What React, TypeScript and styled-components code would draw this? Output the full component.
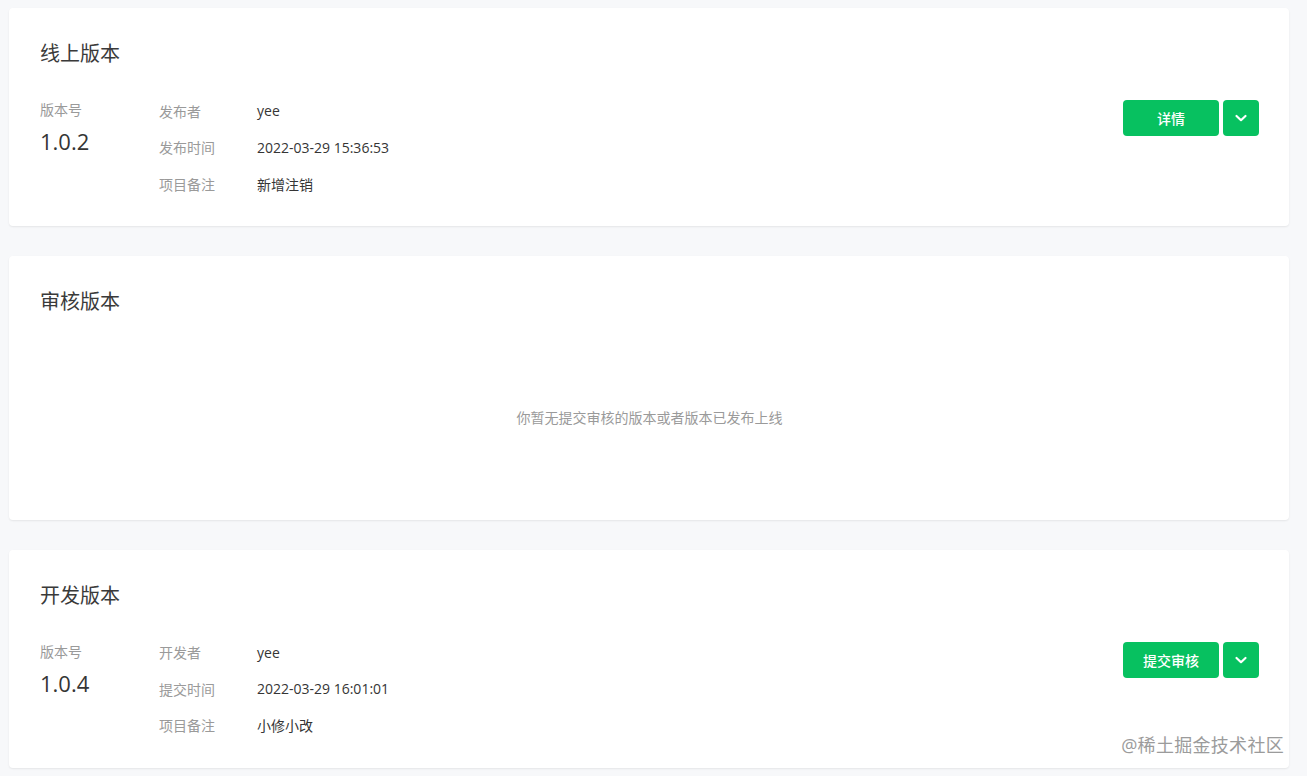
import { FC } from "react";
import styled, { createGlobalStyle } from "styled-components";

const GlobalStyle = createGlobalStyle`
  html, body {
    margin: 0;
    padding: 0;
    background: #f7f8fa;
  }
  body {
    font-family: "Open Sans", "Noto Sans CJK SC", sans-serif;
    color: #353535;
  }
`;

interface InfoRow {
  label: string;
  value: string;
}

interface VersionInfo {
  version: string;
  rows: InfoRow[];
  action: string;
}

// Styled Components
const Page = styled.div`
  position: relative;
  display: flex;
  flex-direction: column;
  gap: 30px;
  padding: 8px 18px 9px 9px;
  min-height: 776px;
  box-sizing: border-box;
`;

const Card = styled.section`
  background: #fff;
  border-radius: 4px;
  box-shadow: 0 1px 2px rgba(0, 0, 0, 0.08);
  padding: 32px 30px 24px 31px;
`;

const Title = styled.h2`
  margin: 0;
  font-size: 20px;
  line-height: 28px;
  font-weight: 400;
  color: #3a3a3a;
`;

const Body = styled.div`
  display: flex;
  align-items: flex-start;
  margin-top: 24.25px;
`;

const VersionCol = styled.div`
  width: 119px;
  flex-shrink: 0;
`;

const Label = styled.div`
  font-size: 14px;
  line-height: 36.5px;
  color: #9a9a9a;
`;

const VersionNum = styled.div`
  font-size: 22px;
  line-height: 24px;
  color: #353535;
`;

const Details = styled.div`
  flex: 1;
`;

const Row = styled.div`
  display: flex;
  height: 36.5px;
  align-items: center;
`;

const RowLabel = styled.span`
  width: 98px;
  font-size: 14px;
  color: #9a9a9a;
`;

const RowValue = styled.span`
  font-size: 14px;
  color: #353535;
`;

const Actions = styled.div`
  display: flex;
  gap: 4px;
  padding-top: 7.75px;
`;

const Button = styled.button<{ $square?: boolean }>`
  height: 36px;
  width: ${(p) => (p.$square ? "36px" : "96px")};
  border: none;
  border-radius: 4px;
  background: #07c160;
  color: #fff;
  font-family: inherit;
  font-size: 14px;
  font-weight: 500;
  display: flex;
  align-items: center;
  justify-content: center;
  padding: 0;
  cursor: pointer;
`;

const Empty = styled.div`
  height: 180px;
  padding-top: 22px;
  box-sizing: border-box;
  display: flex;
  align-items: center;
  justify-content: center;
  font-size: 14px;
  color: #9a9a9a;
`;

const Watermark = styled.div`
  position: absolute;
  right: 23px;
  bottom: 20px;
  font-size: 18px;
  color: #9b9b9b;
  letter-spacing: 0.3px;
  text-shadow: 0 0 2px #fff, 0 0 2px #fff;
`;

const Chevron = () => (
  <svg width="14" height="14" viewBox="0 0 14 14" fill="none">
    <path d="M2.5 5L7 9.2L11.5 5" stroke="#fff" strokeWidth="2.2" strokeLinecap="round" strokeLinejoin="round" />
  </svg>
);

const VersionCard: FC<{ title: string; info: VersionInfo }> = ({ title, info }) => (
  <Card>
    <Title>{title}</Title>
    <Body>
      <VersionCol>
        <Label>版本号</Label>
        <VersionNum>{info.version}</VersionNum>
      </VersionCol>
      <Details>
        {info.rows.map((row, index) => (
          <Row key={index}>
            <RowLabel>{row.label}</RowLabel>
            <RowValue>{row.value}</RowValue>
          </Row>
        ))}
      </Details>
      <Actions>
        <Button>{info.action}</Button>
        <Button $square>
          <Chevron />
        </Button>
      </Actions>
    </Body>
  </Card>
);

const online: VersionInfo = {
  version: "1.0.2",
  rows: [
    { label: "发布者", value: "yee" },
    { label: "发布时间", value: "2022-03-29 15:36:53" },
    { label: "项目备注", value: "新增注销" },
  ],
  action: "详情",
};

const dev: VersionInfo = {
  version: "1.0.4",
  rows: [
    { label: "开发者", value: "yee" },
    { label: "提交时间", value: "2022-03-29 16:01:01" },
    { label: "项目备注", value: "小修小改" },
  ],
  action: "提交审核",
};

const App: FC = () => (
  <>
    <GlobalStyle />
    <Page>
      <VersionCard title="线上版本" info={online} />
      <Card>
        <Title>审核版本</Title>
        <Empty>你暂无提交审核的版本或者版本已发布上线</Empty>
      </Card>
      <VersionCard title="开发版本" info={dev} />
      <Watermark>@稀土掘金技术社区</Watermark>
    </Page>
  </>
);

export default App;
